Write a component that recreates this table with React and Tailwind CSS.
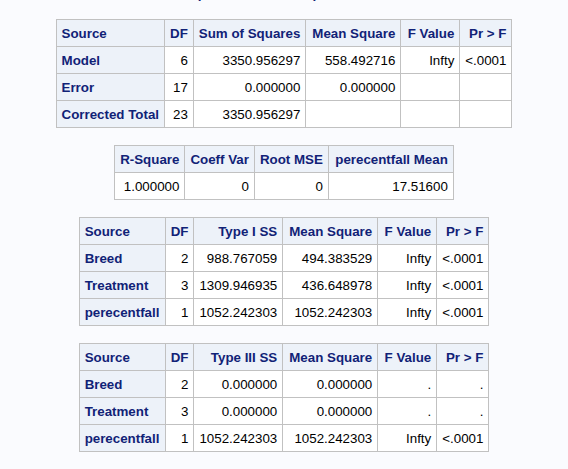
import React from "react";

const FONT = { fontFamily: '"Liberation Sans", Arial, sans-serif' };

const anova = {
  widths: [108, 27, 111, 95, 59, 49],
  head: ["Source", "DF", "Sum of Squares", "Mean Square", "F Value", "Pr > F"],
  rows: [
    ["Model", "6", "3350.956297", "558.492716", "Infty", "<.0001"],
    ["Error", "17", "0.000000", "0.000000", "", ""],
    ["Corrected Total", "23", "3350.956297", "", "", ""],
  ],
};

const fit = {
  widths: [69, 69, 71, 125],
  head: ["R-Square", "Coeff Var", "Root MSE", "perecentfall Mean"],
  rows: [["1.000000", "0", "0", "17.51600"]],
  noRowHeader: true,
};

const type1 = {
  widths: [86, 27, 84, 95, 59, 50],
  head: ["Source", "DF", "Type I SS", "Mean Square", "F Value", "Pr > F"],
  rows: [
    ["Breed", "2", "988.767059", "494.383529", "Infty", "<.0001"],
    ["Treatment", "3", "1309.946935", "436.648978", "Infty", "<.0001"],
    ["perecentfall", "1", "1052.242303", "1052.242303", "Infty", "<.0001"],
  ],
};

const type3 = {
  widths: [86, 27, 84, 95, 59, 50],
  head: ["Source", "DF", "Type III SS", "Mean Square", "F Value", "Pr > F"],
  rows: [
    ["Breed", "2", "0.000000", "0.000000", ".", "."],
    ["Treatment", "3", "0.000000", "0.000000", ".", "."],
    ["perecentfall", "1", "1052.242303", "1052.242303", "Infty", "<.0001"],
  ],
};

const StatTable = ({ data }) => {
  const { widths, head, rows, noRowHeader } = data;
  return (
    <table className="border-collapse border border-[#c1c1c1] bg-white text-[13.33px] leading-[15px]" style={FONT}>
      <thead>
        <tr>
          {head.map((h, i) => (
            <th
              key={h}
              style={{ width: widths[i] }}
              className={`h-[27px] px-[5px] py-0 border border-[#c1c1c1] bg-[#edf2f9] font-bold text-[#112277] whitespace-nowrap ${
                i === 0 && !noRowHeader ? "text-left" : "text-right"
              } ${h === "Pr > F" || h === "F Value" ? "text-center" : ""}`}
            >
              {h}
            </th>
          ))}
        </tr>
      </thead>
      <tbody>
        {rows.map((r, ri) => (
          <tr key={ri}>
            {r.map((c, ci) =>
              ci === 0 && !noRowHeader ? (
                <th
                  key={ci}
                  className="h-[27px] px-[5px] py-0 border border-[#c1c1c1] bg-[#edf2f9] font-bold text-[#112277] text-left whitespace-nowrap"
                >
                  {c}
                </th>
              ) : (
                <td
                  key={ci}
                  className="h-[27px] px-[5px] py-0 border border-[#c1c1c1] text-black text-right whitespace-nowrap"
                >
                  {c}
                </td>
              )
            )}
          </tr>
        ))}
      </tbody>
    </table>
  );
};

export default function App() {
  return (
    <div className="w-[568px] h-[469px] overflow-hidden bg-[#fafbfe] flex flex-col items-center">
      <div
        className="mt-[-14px] h-[16px] leading-[16px] text-[13.33px] font-bold text-[#112277] whitespace-nowrap"
        style={FONT}
      >
        Dependent Variable: perecentfall
      </div>
      <div className="mt-[17px] flex flex-col items-center gap-[17px]">
        <StatTable data={anova} />
        <StatTable data={fit} />
        <StatTable data={type1} />
        <StatTable data={type3} />
      </div>
      <div className="mt-[17px] w-full h-[2px] bg-[#cfcfd2]" />
    </div>
  );
}
